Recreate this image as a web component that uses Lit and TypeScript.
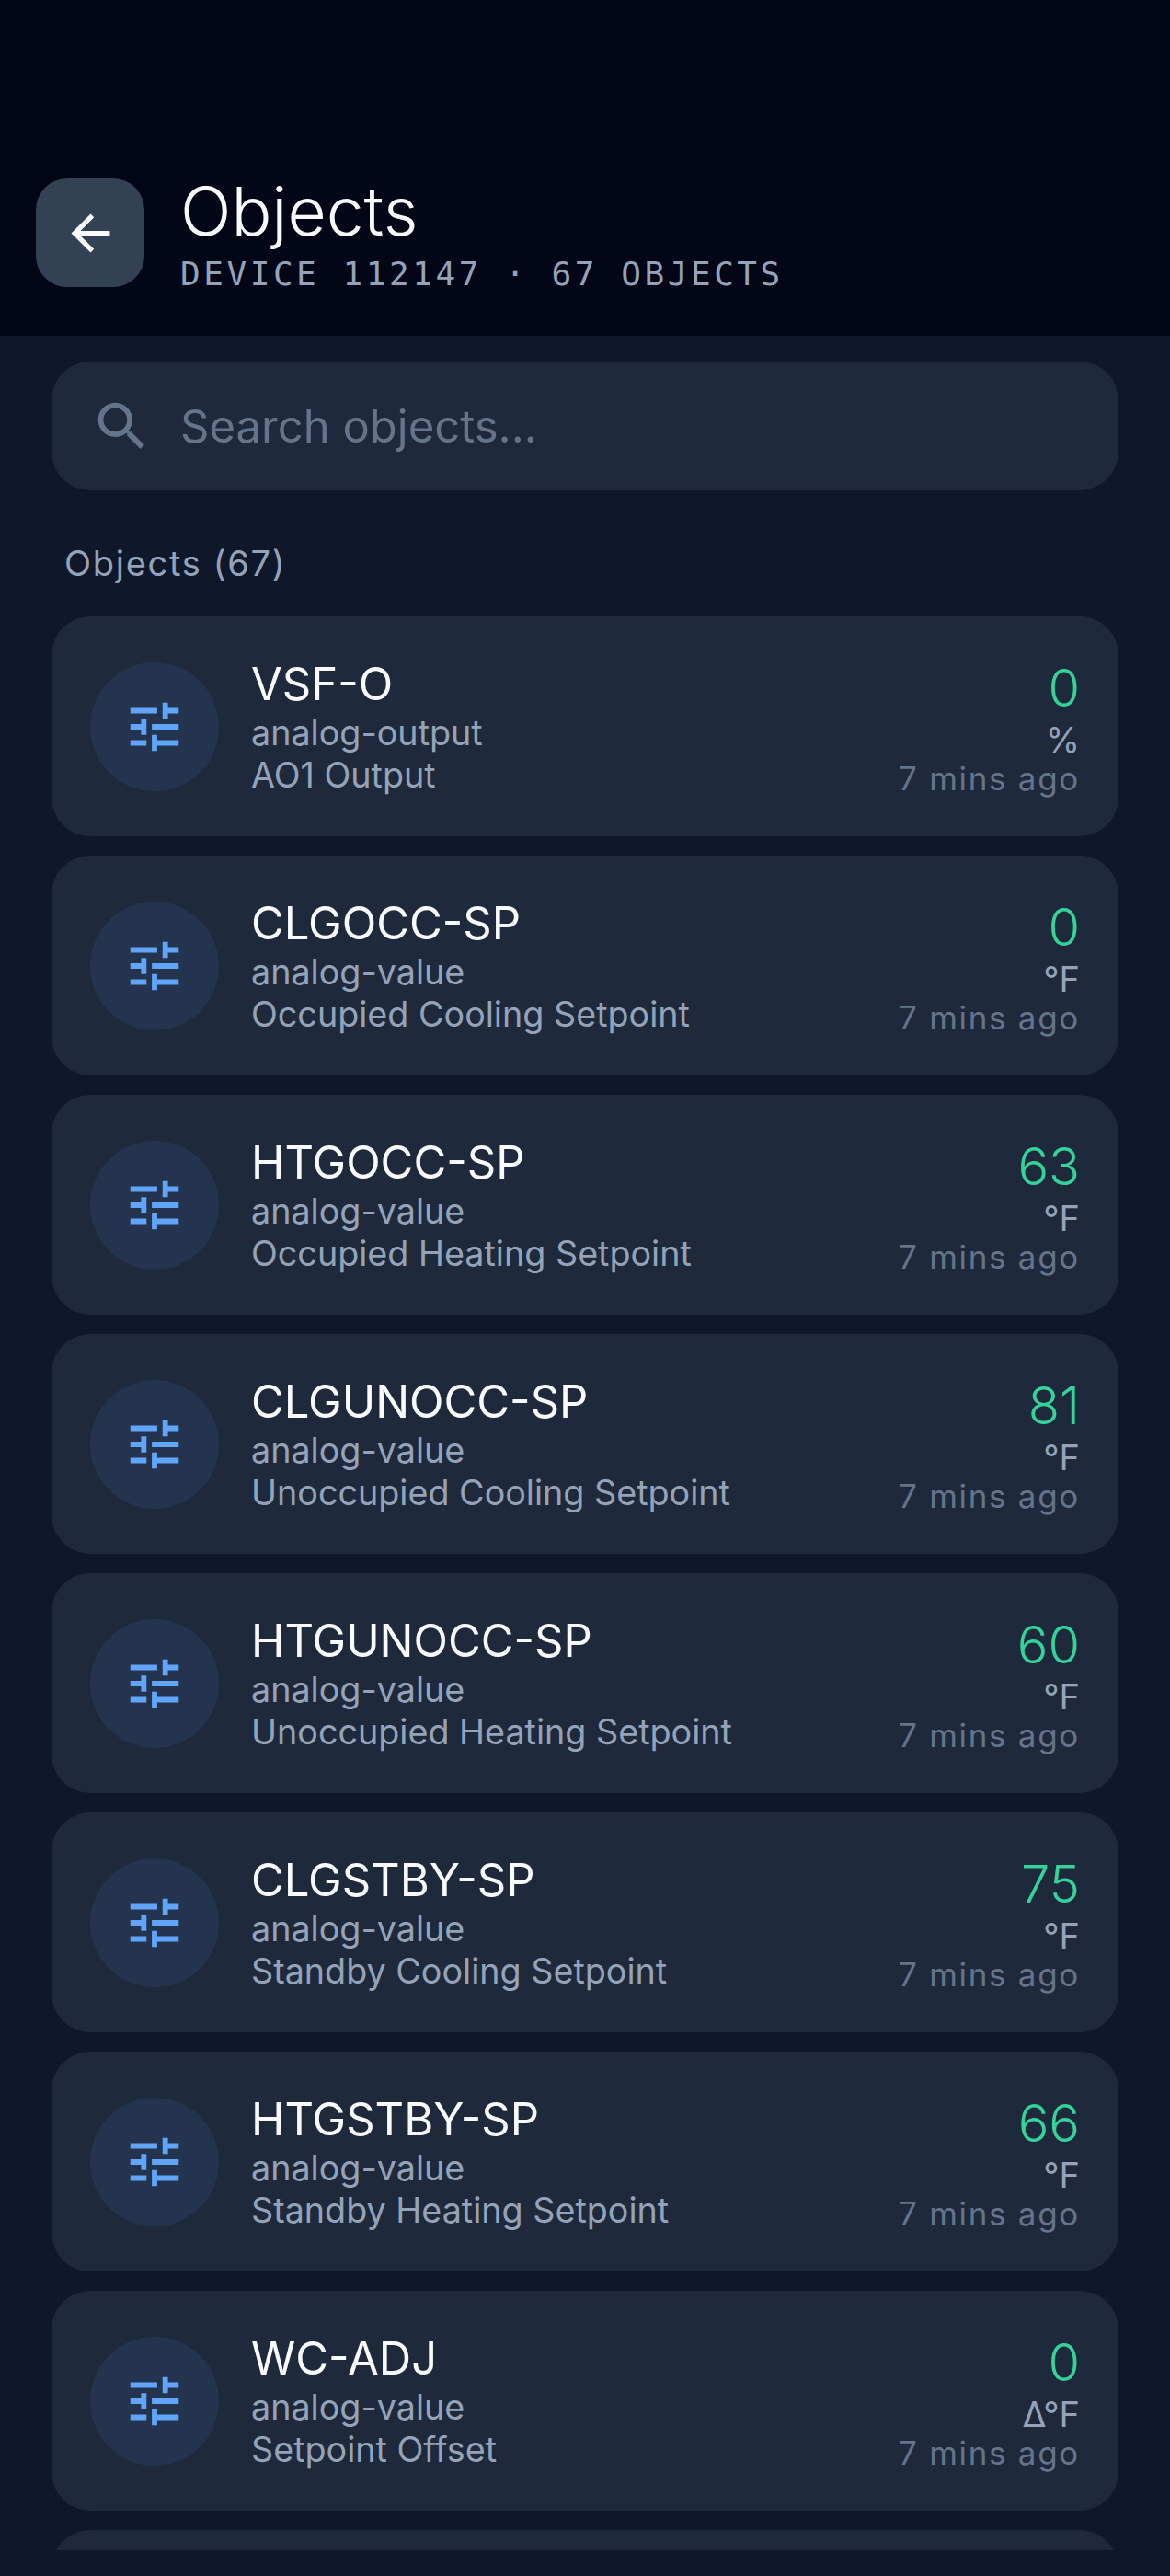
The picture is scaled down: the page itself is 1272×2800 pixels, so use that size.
import { LitElement, html, css, svg } from 'lit';
import { customElement } from 'lit/decorators.js';

const objects = [
  { name: 'VSF-O', type: 'analog-output', desc: 'AO1 Output', value: '0', unit: '%' },
  { name: 'CLGOCC-SP', type: 'analog-value', desc: 'Occupied Cooling Setpoint', value: '0', unit: '°F' },
  { name: 'HTGOCC-SP', type: 'analog-value', desc: 'Occupied Heating Setpoint', value: '63', unit: '°F' },
  { name: 'CLGUNOCC-SP', type: 'analog-value', desc: 'Unoccupied Cooling Setpoint', value: '81', unit: '°F' },
  { name: 'HTGUNOCC-SP', type: 'analog-value', desc: 'Unoccupied Heating Setpoint', value: '60', unit: '°F' },
  { name: 'CLGSTBY-SP', type: 'analog-value', desc: 'Standby Cooling Setpoint', value: '75', unit: '°F' },
  { name: 'HTGSTBY-SP', type: 'analog-value', desc: 'Standby Heating Setpoint', value: '66', unit: '°F' },
  { name: 'WC-ADJ', type: 'analog-value', desc: 'Setpoint Offset', value: '0', unit: 'Δ°F' },
];

const tune = svg`<path d="M3 17v2h6v-2H3zM3 5v2h10V5H3zm10 16v-2h8v-2h-8v-2h-2v6h2zM7 9v2H3v2h4v2h2V9H7zm14 4v-2H11v2h10zm-6-4h2V7h4V5h-4V3h-2v6z"/>`;

@customElement('app-root')
export class AppRoot extends LitElement {
  static styles = css`
    :host {
      display: block;
      min-height: 2800px;
      background: #0f172a;
      font-family: 'Inter', sans-serif;
    }

    .screen {
      height: 2772px;
      overflow: hidden;
    }

    .header {
      height: 365px;
      box-sizing: border-box;
      padding: 194px 39px 0;
      display: flex;
      gap: 39px;
      background: #020617;
    }

    .back {
      width: 118px;
      height: 118px;
      border-radius: 34px;
      background: #334155;
      display: flex;
      align-items: center;
      justify-content: center;
    }

    .back svg {
      width: 63px;
      height: 63px;
      fill: #f8fafc;
    }

    .title {
      font-size: 73px;
      font-weight: 300;
      line-height: 80px;
      color: #f8fafc;
      margin-top: -4px;
    }

    .subtitle {
      font-family: 'DejaVu Sans Mono', monospace;
      font-size: 36px;
      line-height: 40px;
      letter-spacing: 3.55px;
      color: #94a3b8;
      margin-top: 8px;
    }

    .content {
      padding: 28px 56px 0;
    }

    .search {
      height: 140px;
      border-radius: 42px;
      background: #1e293b;
      display: flex;
      align-items: center;
      gap: 29px;
      padding-left: 42px;
    }

    .search svg {
      width: 69px;
      height: 69px;
      fill: #64748b;
    }

    .search span {
      font-size: 49px;
      color: #64748b;
    }

    .label {
      font-size: 38px;
      line-height: 48px;
      letter-spacing: 1.7px;
      color: #94a3b8;
      padding: 55px 0 34px 14px;
    }

    .list {
      display: flex;
      flex-direction: column;
      gap: 21px;
    }

    .card {
      flex: none;
      height: 239px;
      box-sizing: border-box;
      padding: 0 42px;
      border-radius: 42px;
      background: #1e293b;
      display: flex;
      align-items: center;
      gap: 35px;
    }

    .circle {
      flex: none;
      width: 140px;
      height: 140px;
      border-radius: 50%;
      background: #24344f;
      display: flex;
      align-items: center;
      justify-content: center;
    }

    .circle svg {
      width: 70px;
      height: 70px;
      fill: #60a5fa;
    }

    .info {
      flex: 1;
      min-width: 0;
    }

    .name {
      font-size: 49px;
      line-height: 59px;
      color: #f8fafc;
    }

    .sub {
      font-size: 37.7px;
      line-height: 46px;
      color: #94a3b8;
    }

    .right {
      text-align: right;
      padding-top: 5px;
    }

    .value {
      font-size: 56px;
      font-weight: 300;
      line-height: 65px;
      color: #34d399;
    }

    .unit {
      font-size: 38px;
      line-height: 46px;
      color: #94a3b8;
    }

    .time {
      font-size: 35px;
      line-height: 44px;
      letter-spacing: 1.7px;
      color: #64748b;
      margin-top: -3px;
    }
  `;

  render() {
    return html`
      <div class="screen">
        <div class="header">
          <div class="back">
            <svg viewBox="0 0 24 24"><path d="M20 11H7.83l5.59-5.59L12 4l-8 8 8 8 1.41-1.41L7.83 13H20v-2z"/></svg>
          </div>
          <div>
            <div class="title">Objects</div>
            <div class="subtitle">DEVICE 112147 · 67 OBJECTS</div>
          </div>
        </div>
        <div class="content">
          <div class="search">
            <svg viewBox="0 0 24 24"><path d="M15.5 14h-.79l-.28-.27C15.41 12.59 16 11.11 16 9.5 16 5.91 13.09 3 9.5 3S3 5.91 3 9.5 5.91 16 9.5 16c1.61 0 3.09-.59 4.23-1.57l.27.28v.79l5 4.99L20.49 19l-4.99-5zm-6 0C7.01 14 5 11.99 5 9.5S7.01 5 9.5 5 14 7.01 14 9.5 11.99 14 9.5 14z"/></svg>
            <span>Search objects...</span>
          </div>
          <div class="label">Objects (67)</div>
          <div class="list">
            ${objects.map(
              (o) => html`
                <div class="card">
                  <div class="circle"><svg viewBox="0 0 24 24">${tune}</svg></div>
                  <div class="info">
                    <div class="name">${o.name}</div>
                    <div class="sub">${o.type}</div>
                    <div class="sub">${o.desc}</div>
                  </div>
                  <div class="right">
                    <div class="value">${o.value}</div>
                    <div class="unit">${o.unit}</div>
                    <div class="time">7 mins ago</div>
                  </div>
                </div>
              `
            )}
            <div class="card"></div>
          </div>
        </div>
      </div>
    `;
  }
}
